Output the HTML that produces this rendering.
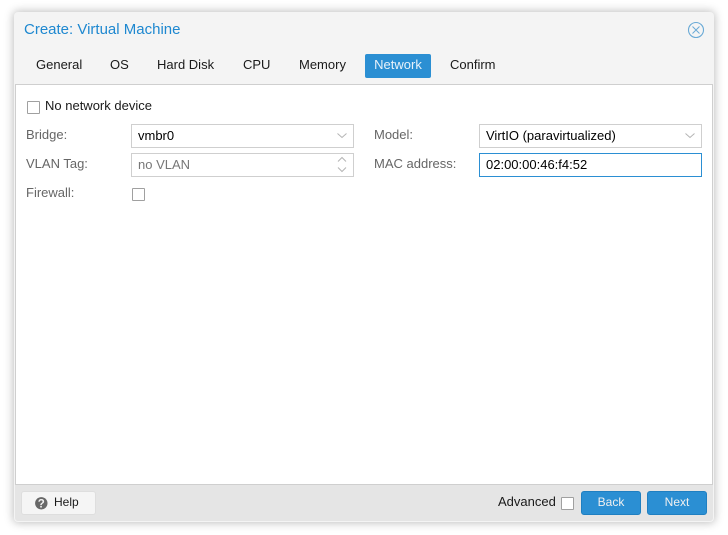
<!DOCTYPE html>
<html>
<head>
<meta charset="utf-8">
<style>
html,body{margin:0;padding:0;width:728px;height:535px;overflow:hidden;background:#fff;font-family:"Liberation Sans",sans-serif;font-size:13px;color:#000}
div,span{position:absolute;white-space:nowrap;box-sizing:border-box}
.win{left:14px;top:12px;width:700px;height:510px;background:#f4f4f4;border-radius:4px;box-shadow:0 0 9px 1px rgba(0,0,0,.25)}
.tab{top:54px;height:24px;line-height:21px;color:#1a1a1a}
.lab{left:26px;height:16px;line-height:16px;color:#666}
.field{height:24px;background:#fff;border:1px solid #cfcfcf;line-height:22px;padding-left:6px;color:#000}
.cb{width:13px;height:13px;background:#fff;border:1px solid #a0a0a0;border-radius:1px}
.btn{top:491px;width:60px;height:24px;background:#2b8fd3;border:1px solid #1f7fc1;border-radius:3px;color:#f0f0f0;text-align:center;line-height:20px;font-size:12px}
svg{position:absolute}
</style>
</head>
<body>
<div class="win"></div>
<div style="left:24px;top:21px;height:18px;line-height:18px;font-size:15px;color:#1e88d0">Create: Virtual Machine</div>
<svg style="left:687px;top:21px" width="18" height="18" viewBox="0 0 18 18" fill="none" stroke="#6aaad6"><circle cx="9" cy="9" r="7.500" stroke-width="1.100"/><path d="M5.500 5.500L12.500 12.500M12.500 5.500L5.500 12.500" stroke-width="1"/></svg>

<div class="tab" style="left:36px">General</div>
<div class="tab" style="left:110px">OS</div>
<div class="tab" style="left:157px">Hard Disk</div>
<div class="tab" style="left:243px">CPU</div>
<div class="tab" style="left:299px">Memory</div>
<div class="tab" style="left:365px;width:66px;background:#2b8fd3;border-radius:2px;color:#e8f2fa;text-align:center">Network</div>
<div class="tab" style="left:450px">Confirm</div>

<div style="left:15px;top:84px;width:698px;height:401px;background:#fff;border:1px solid #cfcfcf"></div>

<div class="cb" style="left:27px;top:101px"></div>
<div style="left:45px;top:98px;height:16px;line-height:16px;color:#1a1a1a">No network device</div>

<div class="lab" style="top:127px">Bridge:</div>
<div class="field" style="left:131px;top:124px;width:223px">vmbr0</div>
<svg style="left:336px;top:131px" width="12" height="9" viewBox="0 0 12 9" fill="none" stroke="#b4b4b4"><path d="M1.500 2.500L6 6.500L10.500 2.500"/></svg>

<div class="lab" style="top:156px">VLAN Tag:</div>
<div class="field" style="left:131px;top:153px;width:223px;color:#777">no VLAN</div>
<svg style="left:336px;top:156px" width="12" height="18" viewBox="0 0 12 18" fill="none" stroke="#b4b4b4"><path d="M2 5.500L6 1.500L10 5.500M2 11.500L6 15.500L10 11.500"/></svg>

<div class="lab" style="top:185px">Firewall:</div>
<div class="cb" style="left:132px;top:188px"></div>

<div class="lab" style="left:374px;top:127px">Model:</div>
<div class="field" style="left:479px;top:124px;width:223px">VirtIO (paravirtualized)</div>
<svg style="left:684px;top:131px" width="12" height="9" viewBox="0 0 12 9" fill="none" stroke="#b4b4b4"><path d="M1.500 2.500L6 6.500L10.500 2.500"/></svg>

<div class="lab" style="left:374px;top:156px">MAC address:</div>
<div class="field" style="left:479px;top:153px;width:223px;border-color:#2b8fd3">02:00:00:46:f4:52</div>

<div style="left:15px;top:484px;width:698px;height:37px;background:#e5e5e5;border-top:1px solid #cfcfcf;border-radius:0 0 3px 3px"></div>

<div style="left:21px;top:491px;width:75px;height:24px;background:#f5f5f5;border:1px solid #dedede;border-radius:3px"></div>
<svg style="left:35px;top:497px" width="13" height="13" viewBox="0 0 13 13"><circle cx="6.300" cy="6.300" r="6.200" fill="#686868"/><text x="6.300" y="10.500" text-anchor="middle" font-family="Liberation Sans" font-size="11.500" font-weight="bold" fill="#f0f0f0">?</text></svg>
<div style="left:54px;top:494px;height:16px;line-height:16px;font-size:12px;color:#1a1a1a">Help</div>

<div style="left:498px;top:494px;height:16px;line-height:16px;color:#1a1a1a">Advanced</div>
<div class="cb" style="left:561px;top:497px"></div>
<div class="btn" style="left:581px">Back</div>
<div class="btn" style="left:647px">Next</div>
</body>
</html>
